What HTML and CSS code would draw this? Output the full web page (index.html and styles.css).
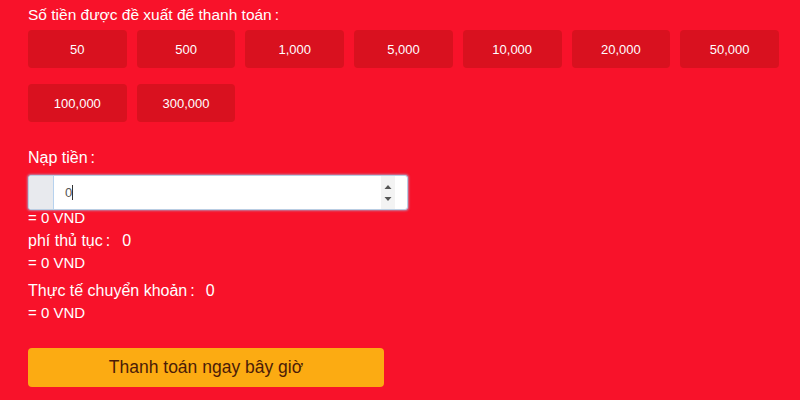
FILE: index.html
```html
<!DOCTYPE html>
<html lang="vi">

<head>
    <meta charset="UTF-8">
    <meta name="viewport" content="width=device-width, initial-scale=1.0">
    <title>Nạp tiền</title>
    <link rel="stylesheet" href="styles.css">
</head>

<body>
    <div class="deposit">
        <p class="label title">Số tiền được đề xuất để thanh toán<span class="colon">:</span></p>
        <div class="amounts">
            <button class="amount">50</button>
            <button class="amount">500</button>
            <button class="amount">1,000</button>
            <button class="amount">5,000</button>
            <button class="amount">10,000</button>
            <button class="amount">20,000</button>
            <button class="amount">50,000</button>
            <button class="amount">100,000</button>
            <button class="amount">300,000</button>
        </div>

        <p class="label deposit-label">Nạp tiền<span class="colon">:</span></p>
        <!-- ô nhập số tiền -->
        <div class="input-group">
            <span class="addon"></span>
            <div class="field">
                <span class="value">0</span><span class="caret"></span>
            </div>
            <span class="spin">
                <svg width="8" height="24" viewBox="0 0 8 24">
                    <path d="M0.5 8 L4 4 L7.5 8 Z" fill="#555" />
                    <path d="M0.5 16 L4 20 L7.5 16 Z" fill="#555" />
                </svg>
            </span>
        </div>
        <p class="convert first">= 0 VND</p>

        <p class="row">phí thủ tục<span class="colon">:</span><span class="num fee">0</span></p>
        <p class="convert">= 0 VND</p>
        <p class="row gap">Thực tế chuyển khoản<span class="colon">:</span><span class="num">0</span></p>
        <p class="convert">= 0 VND</p>

        <button class="pay">Thanh toán ngay bây giờ</button>
    </div>
</body>

</html>
```

FILE: styles.css
```css
body {
    margin: 0;
    background-color: #f8122a;
    font-family: "Liberation Sans", Arial, sans-serif;
    color: #fff;
    overflow: hidden;
}

.deposit {
    padding: 5px 21px 0 28px;
}

p {
    margin: 0;
}

.label {
    font-size: 16px;
    line-height: 20px;
}

.title {
    font-size: 15.5px;
    margin-bottom: 5px;
}

/* dấu hai chấm tách khỏi chữ */
.colon {
    margin-left: 3px;
}

/* lưới các mức tiền gợi ý */
.amounts {
    display: grid;
    grid-template-columns: repeat(7, 1fr);
    column-gap: 10px;
    row-gap: 16px;
}

.amount {
    height: 38px;
    border: none;
    border-radius: 4px;
    background-color: #d9111f;
    color: #fff;
    font-family: inherit;
    font-size: 13px;
    padding: 0;
}

.deposit-label {
    margin-top: 26px;
    margin-bottom: 7px;
}

.input-group {
    display: flex;
    align-items: stretch;
    width: 380px;
    height: 35px;
    box-sizing: border-box;
    background-color: #fff;
    border: 1px solid #b9cde3;
    border-radius: 3px;
    box-shadow: 0 0 2px 1px rgba(160, 190, 230, 0.6);
    overflow: hidden;
}

.addon {
    width: 24px;
    background-color: #e8eaee;
    border-right: 1px solid #b7d2ee;
}

.field {
    flex-grow: 1;
    display: flex;
    align-items: center;
    padding-left: 11px;
    color: #555;
    font-size: 13px;
}

.caret {
    width: 1px;
    height: 15px;
    background-color: #333;
}

.spin {
    display: flex;
    align-items: center;
    justify-content: center;
    width: 14px;
    margin-right: 12px;
    background-color: #f3f3f3;
}

.convert {
    font-size: 15px;
    line-height: 22px;
}

.row {
    font-size: 16px;
    line-height: 22px;
}

.first {
    line-height: 16px;
    margin-bottom: 4px;
}

.gap {
    margin-top: 6px;
}

.num {
    margin-left: 11px;
}

.num.fee {
    margin-left: 12px;
}

.pay {
    display: block;
    margin-top: 24px;
    width: 356px;
    height: 39px;
    border: none;
    border-radius: 4px;
    background-color: #fcab12;
    color: #4b1c08;
    font-family: inherit;
    font-size: 17.5px;
    padding: 0;
}
```
